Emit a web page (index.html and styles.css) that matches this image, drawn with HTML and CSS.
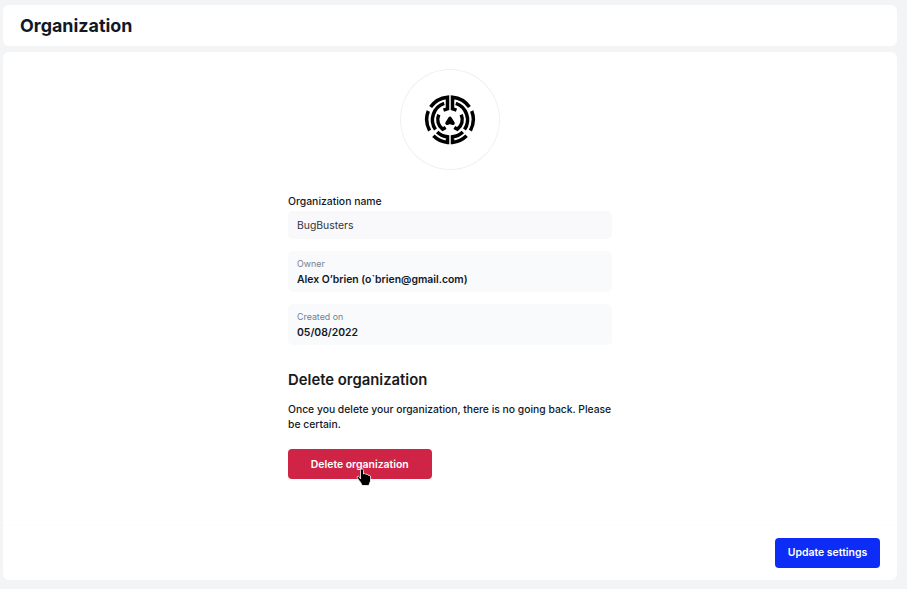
FILE: index.html
```html
<!DOCTYPE html>
<html lang="en">
<head>
<meta charset="utf-8">
<title>Organization</title>
<link rel="stylesheet" href="styles.css">
</head>
<body>
<header class="topbar"><h1>Organization</h1></header>
<main class="panel">
  <div class="content">
    <div class="avatar">
      <svg width="52" height="52" viewBox="-26 -25.8 52 52" fill="none" stroke="#000" stroke-width="3.5">
        <g id="half">
          <path d="M-6.5 -9.6L-2.5 -11V-22.6A23 23 0 0 0 -19.4 -12.8"/>
          <path d="M-21.7 -8.8A23.2 23.2 0 0 0 -20.4 10.8"/>
          <path d="M-5.8 -16.4A17.3 17.3 0 0 0 -14.5 9.8"/>
          <path d="M-11.2 -5.2A12 12 0 0 0 -7.4 9.4L-4.3 7.6"/>
          <path d="M-12.8 12.2A17.3 17.3 0 0 0 -2.5 17V22.6A23 23 0 0 1 -16.6 16"/>
        </g>
        <use href="#half" transform="scale(-1 1)"/>
        <path d="M0 -1.5L-3 3.4L0 2.6L3 3.4Z" fill="#000" stroke-linejoin="round"/>
      </svg>
    </div>
    <label class="label" for="name">Organization name</label>
    <input class="input" id="name" value="BugBusters">
    <div class="info"><span>Owner</span><strong>Alex O’brien (o`brien@gmail.com)</strong></div>
    <div class="info"><span>Created on</span><strong>05/08/2022</strong></div>
    <h2>Delete organization</h2>
    <p>Once you delete your organization, there is no going back. Please be certain.</p>
    <button class="button danger">Delete organization
      <svg class="cursor" width="16" height="19" viewBox="0 0 16 19"><path d="M4.5 11V2.5C4.5 .4 7.5 .4 7.5 2.5V6C8.2 5.3 9.6 5.6 10 6.5C10.7 5.9 12 6.4 12.2 7.3C13.5 6.8 14.6 7.6 14.6 9V12C14.6 14 13.2 15 13 17.5H6C5.8 15.5 3.2 12.8 1.4 10.2C.3 8.5 2.2 7.5 3.3 8.8Z" fill="#000" stroke="#fff" stroke-width=".8"/></svg>
    </button>
  </div>
  <footer class="footer"><button class="button primary">Update settings</button></footer>
</main>
</body>
</html>
```
FILE: styles.css
```css
* { box-sizing: border-box; }
body { margin: 0; height: 589px; padding: 4.5px 10px 9.5px 2.5px; background: #f3f4f6; color: #111827; font-family: Inter, sans-serif; display: flex; flex-direction: column; gap: 6px; }
.topbar { height: 41px; padding: 1px 0 0 17.5px; display: flex; align-items: center; background: #fff; border-radius: 6px; }
h1 { margin: 0; font-size: 17.9px; line-height: 24px; font-weight: 700; }
.panel { flex: 1; background: #fff; border-radius: 6px; display: flex; flex-direction: column; overflow: hidden; }
.content { width: 323.5px; margin: 0 auto; padding-top: 17.5px; flex: 1; }
.avatar { width: 100px; height: 101px; margin: 0 auto 24.5px; border: 1.5px solid #f0f0f4; border-radius: 50%; display: flex; align-items: center; justify-content: center; }
.label { display: block; font-size: 10.4px; line-height: 14px; font-weight: 500; }
.input { display: block; width: 100%; height: 28px; margin: 2px 0 12px; padding: 1px 9px 0; border: 0; border-radius: 5px; background: #f9f9fb; color: #303541; font: 10.4px Inter, sans-serif; }
.info { height: 41.5px; margin-bottom: 11.5px; padding: 6px 9px; border-radius: 5px; background: #f9fafc; display: flex; flex-direction: column; }
.info span { color: #748094; font-size: 8.85px; line-height: 14px; }
.info strong { font-size: 10.4px; line-height: 17px; font-weight: 600; }
h2 { margin: 25px 0 11.5px; font-size: 14.85px; line-height: 20px; font-weight: 600; color: #18191c; }
p { margin: 0 -4px 0 0; font-size: 10.33px; line-height: 15px; font-weight: 500; }
.button { display: block; height: 29.5px; padding: 0; border: 0; border-radius: 4px; color: #fff; font: 600 10.45px Inter, sans-serif; }
.danger { position: relative; width: 143.5px; height: 30px; margin-top: 17px; padding-top: 1px; background: #cf2445; }
.cursor { position: absolute; left: 68px; top: 19px; }
.footer { height: 55px; padding: 12.5px 17px 0; border-top: 1px solid #fcfcfc; display: flex; justify-content: flex-end; }
.primary { width: 105px; background: #0d2cf5; }
```
